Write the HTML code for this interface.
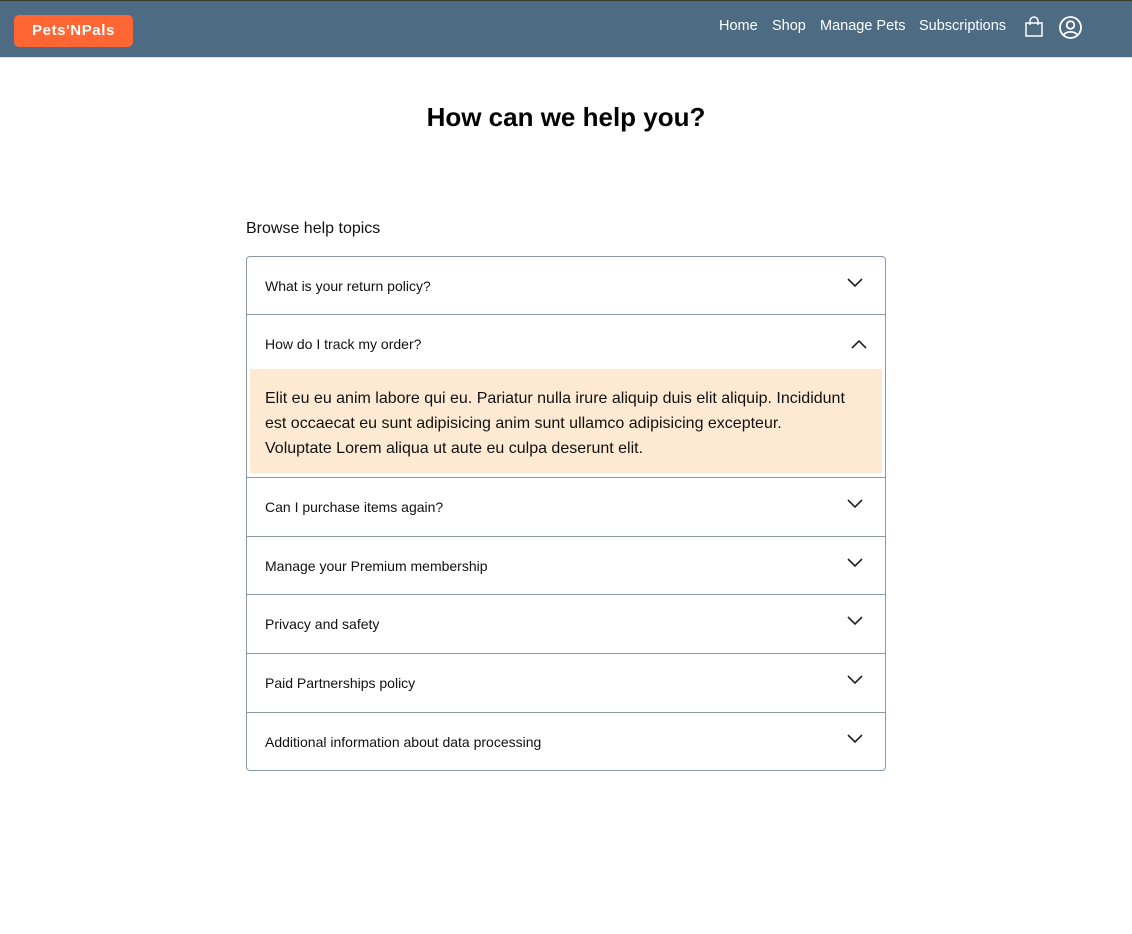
<!DOCTYPE html>
<html><head><meta charset="utf-8"><style>
*{box-sizing:border-box;margin:0;padding:0}
body{width:1132px;height:934px;background:#fff;font-family:"Liberation Sans",Arial,sans-serif;color:#111;position:relative;overflow:hidden}
.hdr{position:absolute;left:0;top:0;width:1132px;height:58px;background:#4d6b82;border-top:1px solid #3a3a30;border-bottom:1px solid #d8dde2}
.logo{position:absolute;left:14px;top:14px;width:119px;height:32px;background:#ff6633;border-radius:5px;color:#fff;font-weight:bold;font-size:15px;line-height:32px;text-align:center;letter-spacing:0.6px}
.nav{position:absolute;top:17px;font-size:14.5px;color:#fff}
h1{position:absolute;top:102px;left:0;width:1132px;text-align:center;font-size:26px;font-weight:bold;color:#000}
.bt{position:absolute;left:246px;top:220px;font-size:16px;color:#111}
.acc{position:absolute;left:246px;top:256px;width:640px;height:515px;border:1px solid #8a97a4;border-radius:4px;overflow:hidden}
.row{height:58px;border-top:1px solid #8a97a4;position:relative;font-size:14px;padding-left:18px;line-height:58px}
.row:first-child{border-top:none;height:57px}
.row svg{position:absolute;right:22px;top:21px}
.panel{margin:0 3px 4px 3px;background:#feead3;padding:17px 15px 0 15px;height:104px;font-size:16px;line-height:25px;color:#111;white-space:nowrap}
</style></head><body>
<div class="hdr">
<div class="logo">Pets'NPals</div>
<span class="nav" style="left:719px">Home</span>
<span class="nav" style="left:772px">Shop</span>
<span class="nav" style="left:820px">Manage Pets</span>
<span class="nav" style="left:919px">Subscriptions</span>
<svg style="position:absolute;left:1024px;top:15px" width="20" height="22" viewBox="0 0 20 22" fill="none" stroke="#fff" stroke-width="1.5"><path d="M2 7h16v13H2z"/><path d="M6 9V5a4 4 0 0 1 8 0v4"/></svg>
<svg style="position:absolute;left:1058px;top:14px" width="25" height="25" viewBox="0 0 25 25" fill="none" stroke="#fff" stroke-width="1.8"><circle cx="12.5" cy="12.5" r="10.5"/><circle cx="12.5" cy="10" r="3.8"/><path d="M5.5 20a8 6 0 0 1 14 0"/></svg>
</div>
<h1>How can we help you?</h1>
<div class="bt">Browse help topics</div>
<div class="acc">
<div class="row">What is your return policy?<svg width="16" height="10" viewBox="0 0 16 10" fill="none" stroke="#222" stroke-width="1.6"><path d="M1 1l7 7 7-7"/></svg></div>
<div class="row" style="height:163px;line-height:normal;padding-left:0">
<div style="height:54px;line-height:58px;padding-left:18px;position:relative">How do I track my order?<svg style="position:absolute;right:18px;top:24px" width="16" height="10" viewBox="0 0 16 10" fill="none" stroke="#222" stroke-width="1.6"><path d="M1 9l7-7 7 7"/></svg></div>
<div class="panel">Elit eu eu anim labore qui eu. Pariatur nulla irure aliquip duis elit aliquip. Incididunt<br>est occaecat eu sunt adipisicing anim sunt ullamco adipisicing excepteur.<br>Voluptate Lorem aliqua ut aute eu culpa deserunt elit.</div>
</div>
<div class="row" style="height:59px">Can I purchase items again?<svg width="16" height="10" viewBox="0 0 16 10" fill="none" stroke="#222" stroke-width="1.6"><path d="M1 1l7 7 7-7"/></svg></div>
<div class="row">Manage your Premium membership<svg width="16" height="10" viewBox="0 0 16 10" fill="none" stroke="#222" stroke-width="1.6"><path d="M1 1l7 7 7-7"/></svg></div>
<div class="row" style="height:59px">Privacy and safety<svg width="16" height="10" viewBox="0 0 16 10" fill="none" stroke="#222" stroke-width="1.6"><path d="M1 1l7 7 7-7"/></svg></div>
<div class="row" style="height:59px">Paid Partnerships policy<svg width="16" height="10" viewBox="0 0 16 10" fill="none" stroke="#222" stroke-width="1.6"><path d="M1 1l7 7 7-7"/></svg></div>
<div class="row">Additional information about data processing<svg width="16" height="10" viewBox="0 0 16 10" fill="none" stroke="#222" stroke-width="1.6"><path d="M1 1l7 7 7-7"/></svg></div>
</div>
</body></html>
